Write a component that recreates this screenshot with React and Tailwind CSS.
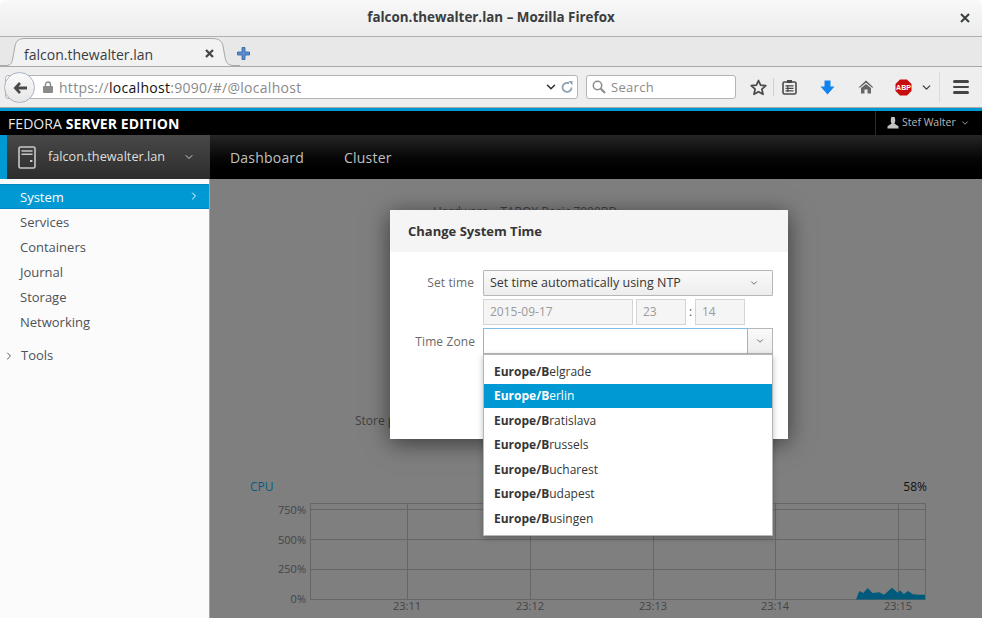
import React from "react";
import { ChevronDown, ChevronRight } from "lucide-react";

const sans = "font-['Open_Sans',sans-serif]";
const zones = ["elgrade", "erlin", "ratislava", "russels", "ucharest", "udapest", "usingen"];
const navItems = ["Services", "Containers", "Journal", "Storage", "Networking"];

const BackIcon = () => (
  <svg width="16" height="14" viewBox="0 0 16 14">
    <path d="M7 1 L1.5 7 L7 13 L9 11 L6.5 8.6 H15 V5.4 H6.5 L9 3 Z" fill="#4a4a4a" />
  </svg>
);

const LockIcon = () => (
  <svg width="10" height="12" viewBox="0 0 10 12">
    <path d="M2.5 5 V3.5 a2.5 2.5 0 0 1 5 0 V5" fill="none" stroke="#8a8a8a" strokeWidth="1.4" />
    <rect x="0" y="5" width="10" height="7" rx="1" fill="#8a8a8a" />
  </svg>
);

const BrowserToolbarIcons = () => (
  <div className="flex items-center h-full relative">
    {/* star */}
    <svg className="ml-[14px]" width="17" height="17" viewBox="0 0 17 17">
      <path d="M8.5 1.5 L10.6 6.2 L15.8 6.7 L11.9 10.2 L13 15.3 L8.5 12.7 L4 15.3 L5.1 10.2 L1.2 6.7 L6.4 6.2 Z" fill="none" stroke="#4a4a4a" strokeWidth="1.7" strokeLinejoin="round" />
    </svg>
    <div className="w-px h-[18px] bg-[#cfcfcf] ml-[6px]" />
    {/* clipboard list */}
    <svg className="ml-[8px]" width="15" height="16" viewBox="0 0 15 16">
      <rect x="1" y="3" width="13" height="12" rx="1.5" fill="none" stroke="#4a4a4a" strokeWidth="1.6" />
      <rect x="5" y="1" width="5" height="3" fill="#4a4a4a" />
      <path d="M3.5 6.8 H11.5 M3.5 9.3 H11.5 M3.5 11.8 H11.5 M5.8 6 V13" stroke="#4a4a4a" strokeWidth="1.2" />
    </svg>
    {/* download arrow */}
    <svg className="ml-[23px]" width="15" height="15" viewBox="0 0 15 15">
      <path d="M4.5 0.5 H10.5 V6.5 H14.5 L7.5 14.5 L0.5 6.5 H4.5 Z" fill="#0f84ef" />
    </svg>
    {/* home */}
    <svg className="ml-[23px]" width="16" height="14" viewBox="0 0 16 14">
      <path d="M8 0.5 L15.5 7.5 L14 7.5 L8 2.6 L2 7.5 L0.5 7.5 Z" fill="#555" />
      <path d="M3 8 L8 4 L13 8 V13.5 H9.5 V9.5 H6.5 V13.5 H3 Z" fill="#666" />
    </svg>
    {/* adblock octagon */}
    <svg className="ml-[21px]" width="17" height="17" viewBox="0 0 17 17">
      <path d="M5 0.5 H12 L16.5 5 V12 L12 16.5 H5 L0.5 12 V5 Z" fill="#c70d0d" />
      <text x="8.5" y="11" textAnchor="middle" fontSize="7" fontWeight="700" fill="#fff" fontFamily="Liberation Sans, sans-serif">ABP</text>
    </svg>
    <ChevronDown className="ml-[8px] text-[#444]" size={13} strokeWidth={2.6} />
    <div className="w-px h-[30px] bg-[#dcdcdc] ml-[6px]" />
    {/* hamburger */}
    <div className="ml-[13px] flex flex-col gap-[3px]">
      <div className="w-[16px] h-[2.5px] rounded-sm bg-[#444]" />
      <div className="w-[16px] h-[2.5px] rounded-sm bg-[#444]" />
      <div className="w-[16px] h-[2.5px] rounded-sm bg-[#444]" />
    </div>
  </div>
);

const BrowserChrome = () => (
  <div className={`${sans} shrink-0`}>
    {/* title bar */}
    <div className="h-[37px] flex items-center justify-center relative rounded-t-md bg-gradient-to-b from-[#f8f8f8] to-[#ececec] border-b border-[#b0b0b0]">
      <span className="text-[13.4px] font-bold text-[#3a3d3f] pb-[2px]">falcon.thewalter.lan – Mozilla Firefox</span>
      <svg className="absolute right-[12px] top-[13px]" width="10" height="10" viewBox="0 0 10 10">
        <path d="M1 1 L9 9 M9 1 L1 9" stroke="#3a3d3f" strokeWidth="2" />
      </svg>
    </div>
    {/* tab strip */}
    <div className="h-[30px] bg-[#e8e8e8] border-b border-[#a8a8a8] flex relative">
      <svg className="absolute left-0 top-0" width="240" height="30" viewBox="0 0 240 30">
        <path d="M0 28.5 H6 C11 28.5 12 26 13 20 L15 9 C16 4 19 1.5 25 1.5 H212 C219 1.5 222 4 223 9 L225 20 C226 26 228 28.5 234 28.5 H240 V29 H0 Z" fill="#f2f2f2" />
        <path d="M0 28.5 H6 C11 28.5 12 26 13 20 L15 9 C16 4 19 1.5 25 1.5 H212 C219 1.5 222 4 223 9 L225 20 C226 26 228 28.5 234 28.5 H240" fill="none" stroke="#a8a8a8" />
      </svg>
      <div className="relative flex items-center h-full pl-[24px] pt-[4px]">
        <span className="text-[14px] text-[#3a3d3f] w-[181px] pt-[2px]">falcon.thewalter.lan</span>
        <svg width="9" height="9" viewBox="0 0 9 9">
          <path d="M1 1 L8 8 M8 1 L1 8" stroke="#454545" strokeWidth="2.2" />
        </svg>
        <svg className="ml-[23px]" width="13" height="13" viewBox="0 0 13 13">
          <path d="M5 0.5 H8 V5 H12.5 V8 H8 V12.5 H5 V8 H0.5 V5 H5 Z" fill="#5c8fd0" stroke="#2f5f9f" strokeWidth="0.8" />
        </svg>
      </div>
    </div>
    {/* url bar */}
    <div className="h-[41px] bg-[#eeeeee] border-b border-[#a8a8a8] flex items-center pl-[5px] relative">
      <div className="w-[573px] h-[24px] ml-0 bg-white border border-[#b4b4b4] rounded-[3px] flex items-center pl-[37px] pr-[4px] mt-[-1px]">
        <LockIcon />
        <span className="ml-[6px] pt-[2px] text-[14px] text-[#8a8a8a] tracking-[0.28px] flex-1">
          https://<span className="text-[#111]">localhost</span>:9090/#/@localhost
        </span>
        <ChevronDown className="text-[#333]" size={14} strokeWidth={2.6} />
        <svg className="ml-[3px]" width="12" height="12" viewBox="0 0 12 12">
          <path d="M10.5 6.5 A4.5 4.5 0 1 1 6.5 2 H8" fill="none" stroke="#8fa2b3" strokeWidth="1.8" />
          <path d="M7.5 0 H11.5 V4.5 Z" fill="#8fa2b3" />
        </svg>
      </div>
      {/* back button sits over the url field */}
      <div className="absolute left-[4px] top-[5px] w-[31px] h-[31px] rounded-full bg-gradient-to-b from-[#fbfbfb] to-[#e6e6e6] border border-[#a9b4c2] flex items-center justify-center">
        <BackIcon />
      </div>
      <div className="w-[150px] h-[24px] ml-[8px] bg-white border border-[#b4b4b4] rounded-[3px] flex items-center pl-[5px] mt-[-1px]">
        <svg width="14" height="14" viewBox="0 0 14 14">
          <circle cx="5.5" cy="5.5" r="4.2" fill="none" stroke="#8a8a8a" strokeWidth="1.5" />
          <path d="M8.8 8.8 L13 13" stroke="#8a8a8a" strokeWidth="2" />
        </svg>
        <span className="ml-[5px] pt-[2px] text-[13px] text-[#8a8a8a] tracking-[0.3px]">Search</span>
      </div>
      <BrowserToolbarIcons />
    </div>
    <div className="h-[3px] bg-[#0099d3]" />
  </div>
);

const Masthead = () => (
  <div className="shrink-0 text-white">
    <div className="h-[24px] bg-black flex items-center pl-[8px]">
      <span className="text-[14px] tracking-[0.07px] text-[#e8e8e8]">
        FEDORA <span className="font-bold text-white">SERVER EDITION</span>
      </span>
      <div className="ml-auto h-full flex items-center border-l border-[#2b2b2b] w-[107px] pl-[11px] text-[#b8b8b8]">
        <svg width="12" height="12" viewBox="0 0 12 12">
          <path d="M4 1.5 a2 2 0 0 1 4 0 C8.6 4 8 5.5 7.3 6.5 L11.5 9.2 V11.5 H0.5 V9.2 L4.7 6.5 C4 5.5 3.4 4 4 1.5 Z" fill="#c4c4c4" />
        </svg>
        <span className="ml-[3px] text-[10.5px]">Stef Walter</span>
        <ChevronDown className="ml-[4px]" size={10} strokeWidth={2} />
      </div>
    </div>
    <div className="h-[44px] flex bg-gradient-to-b from-[#262626] to-[#000000]">
      <div className="w-[210px] flex items-center border-l-[7px] border-[#0099d3] bg-gradient-to-b from-[#484848] to-[#2d2d2d] pl-[11px]">
        <svg width="18" height="23" viewBox="0 0 18 23">
          <rect x="1" y="1" width="16" height="21" rx="1.5" fill="none" stroke="#c8c8c8" strokeWidth="1.6" />
          <path d="M3.5 5 H14.5 M3.5 8.2 H14.5" stroke="#c8c8c8" strokeWidth="1.5" />
          <rect x="12" y="14" width="2.4" height="2" fill="#c8c8c8" />
        </svg>
        <span className="ml-[12px] text-[12.7px] text-[#dedede]">falcon.thewalter.lan</span>
        <ChevronDown className="ml-[18px] text-[#d0d0d0]" size={12} strokeWidth={2} />
      </div>
      <div className="flex items-center pl-[20px] gap-[40px] text-[14px] tracking-[0.2px] text-[#c0c0c0]">
        <span>Dashboard</span>
        <span>Cluster</span>
      </div>
    </div>
  </div>
);

const Sidebar = () => (
  <div className="w-[210px] shrink-0 bg-[#fbfbfb] border-r border-[#a6a6a6] pt-[5px] text-[13px] text-[#4d5258]">
    <div className="h-[25px] flex items-center pl-[20px] pr-[9px] pt-[2px] bg-[#0099d3] border-y border-[#0088c0] text-white">
      <span className="flex-1">System</span>
      <ChevronRight size={12} strokeWidth={2} className="-mt-[3px]" />
    </div>
    {navItems.map((item) => (
      <div key={item} className="h-[25px] flex items-center pl-[20px] pt-[2px]">{item}</div>
    ))}
    <div className="h-[25px] flex items-center pl-[3px] mt-[8px] pt-[2px]">
      <ChevronRight size={12} strokeWidth={2} className="text-[#555]" />
      <span className="ml-[6px]">Tools</span>
    </div>
  </div>
);

const areaPts =
  "856,599.5 859.3,591 863.3,593 867.7,588 872.3,593 879.3,592.3 884,594.7 892,587.7 897.7,592.7 900,590.3 903.7,594 908.3,591 912.7,594.3 920,594.7 925,594.7 925,599.5";

// chart drawn in page x / y, shifted by the svg's own offset
const CpuChart = () => (
  <svg className="block" width="732" height="118" viewBox="250 500 732 118">
    <g stroke="#666666" strokeWidth="1" shapeRendering="crispEdges">
      <rect x="310.5" y="503.5" width="615" height="96" fill="none" />
      {[509.5, 539.5, 569.5].map((y) => (
        <line key={y} x1="310" x2="925" y1={y} y2={y} />
      ))}
      {[407.5, 530.5, 653.5, 775.5, 898.5].map((x) => (
        <line key={x} x1={x} x2={x} y1="503" y2="599" />
      ))}
    </g>
    <polygon points={areaPts} fill="#005a7c" />
    <g fontFamily="Open Sans, sans-serif" fontSize="11" fill="#444444">
      {[["750%", 514], ["500%", 544], ["250%", 573], ["0%", 603]].map(([t, y]) => (
        <text key={t} x="306" y={y} textAnchor="end">{t}</text>
      ))}
      {[["23:11", 407], ["23:12", 530], ["23:13", 653], ["23:14", 775], ["23:15", 898]].map(([t, x]) => (
        <text key={t} x={x} y="610" textAnchor="middle">{t}</text>
      ))}
    </g>
  </svg>
);

const Background = () => (
  <div className="absolute inset-0 flex flex-col pl-[40px] text-[12px] text-[#3f3f3f]">
    <div className="h-[30px] pt-[25px] flex">
      <span className="ml-[183px] leading-[16px]">Hardware</span>
      <span className="ml-[12px] leading-[16px]">TAROX Basic 7000BD</span>
    </div>
    <div className="mt-[204px] ml-[105px] h-[16px] leading-[16px]">Store performance data</div>
    <div className="mt-[49px] flex pr-[55px] h-[18px] items-center">
      <span className="text-[#005f85] text-[12px]">CPU</span>
      <span className="ml-auto text-[#111] text-[12px]">58%</span>
    </div>
    <div className="mt-[4px]">
      <CpuChart />
    </div>
  </div>
);

const inputCls = "h-[26px] border border-[#d4d4d4] bg-[#f5f5f5] text-[#9a9a9a] flex items-center pl-[6px]";

const Modal = () => (
  <div className="absolute left-[180px] top-[31px] w-[398px] h-[229px] bg-white shadow-[0_4px_22px_rgba(0,0,0,0.55)] text-[12px]">
    <div className="h-[42px] bg-[#f5f5f5] flex items-center pl-[18px] pt-[2px] text-[13px] font-bold text-[#363636]">
      Change System Time
    </div>
    <div className="relative pt-[18px] pl-[93px] pr-[15px] flex flex-col gap-[3px]">
      <div className="relative h-[26px] flex items-center border border-[#b7b7b7] rounded-[1px] bg-gradient-to-b from-[#fafafa] to-[#ededed] pl-[6px] text-[#363636]">
        <span className="absolute right-[298px] whitespace-nowrap text-[#6a6a6a] tracking-[0.1px]">Set time</span>
        <span className="flex-1 text-[12.5px]">Set time automatically using NTP</span>
        <ChevronDown className="mr-[13px] text-[#555]" size={10} strokeWidth={2} />
      </div>
      <div className="flex items-center">
        <div className={`${inputCls} w-[150px]`}>2015-09-17</div>
        <div className={`${inputCls} w-[50px] ml-[3px]`}>23</div>
        <span className="w-[9px] text-center text-[#555]">:</span>
        <div className={`${inputCls} w-[50px]`}>14</div>
      </div>
      <div className="relative flex h-[26px]">
        <span className="absolute right-[298px] top-[5px] whitespace-nowrap text-[#6a6a6a] tracking-[0.1px]">Time Zone</span>
        <div className="flex-1 border border-[#7dbde8] border-b-[#b7b7b7] bg-white" />
        <div className="w-[25px] border border-l-0 border-[#b7b7b7] bg-gradient-to-b from-[#fafafa] to-[#ededed] flex items-center justify-center">
          <ChevronDown className="text-[#555]" size={10} strokeWidth={2} />
        </div>
      </div>
      {/* typeahead menu hangs out of the dialog */}
      <div className="absolute left-[93px] top-[102px] w-[290px] h-[182px] z-10 bg-white border border-[#b7b7b7] pt-[4px] shadow-[0_2px_6px_rgba(0,0,0,0.25)] text-[#363636]">
        {zones.map((zone) => (
          <div key={zone} className={`h-[24.5px] flex items-center pl-[10px] pt-[1px] ${zone === "erlin" ? "bg-[#0099d3] text-white" : ""}`}>
            <span><span className="font-bold">Europe/B</span>{zone}</span>
          </div>
        ))}
      </div>
    </div>
  </div>
);

export default function App() {
  return (
    <div className={`${sans} w-[982px] h-[618px] overflow-hidden flex flex-col bg-white`}>
      <BrowserChrome />
      <Masthead />
      <div className="flex flex-1 min-h-0">
        <Sidebar />
        <div className="flex-1 relative bg-[#7f7f7f] overflow-hidden">
          <Background />
          <Modal />
        </div>
      </div>
    </div>
  );
}
